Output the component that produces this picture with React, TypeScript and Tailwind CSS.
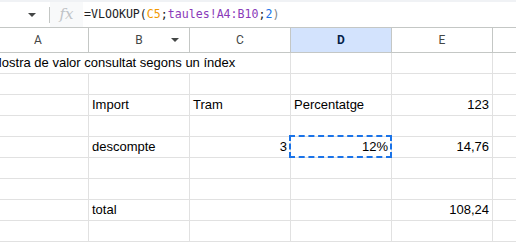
const cols = ["A", "B", "C", "D", "E", "F"];

type Cell = { text?: string; right?: boolean };

const rows: Cell[][] = [
  [],
  [{}, { text: "Import" }, { text: "Tram" }, { text: "Percentatge" }, { text: "123", right: true }],
  [],
  [{}, { text: "descompte" }, { text: "3", right: true }, { text: "12%", right: true }, { text: "14,76", right: true }],
  [],
  [],
  [{}, { text: "total" }, {}, {}, { text: "108,24", right: true }],
  [],
];

function Caret({ className }: { className: string }) {
  return (
    <svg className={className} viewBox="0 0 8 4" fill="#444746">
      <path d="M0 0h8L4 4z" />
    </svg>
  );
}

export default function App() {
  return (
    <div className="w-[516px] h-[243px] overflow-hidden bg-white font-['Liberation_Sans',Arial,sans-serif] text-[13px] text-black">
      <div className="h-[2px] bg-[#f0f2f5]" />
      {/* formula bar */}
      <div className="flex h-[26px] items-center border-b border-[#c4c7c5]">
        <div className="flex w-[49px] justify-end pr-[13px]">
          <Caret className="w-[8px] h-[4px]" />
        </div>
        <div className="h-[16px] w-px bg-[#c4c7c5]" />
        <div className="flex h-full w-[33px] items-center justify-center bg-[#f8f9fa] font-['DejaVu_Serif',serif] italic text-[15px] text-[#c0c3c7]">
          fx
        </div>
        <div className="pl-[1px] font-['DejaVu_Sans_Mono',monospace] text-[11.6px] text-[#202124] whitespace-nowrap">
          =VLOOKUP(<span className="text-[#f29900]">C5</span>;
          <span className="text-[#8a3ab9]">taules!A4:B10</span>;
          <span className="text-[#1a73e8]">2</span>
          <span className="text-[#80868b]">)</span>
        </div>
      </div>

      <div className="overflow-hidden">
        <div className="ml-[-12px] w-[620px]">
          {/* column headers */}
          <div className="flex h-[25px] border-b border-[#c4c7c5] font-['Roboto',sans-serif] text-[12px] text-[#444746]">
            {cols.map((c) => (
              <div
                key={c}
                className={
                  "relative flex w-[101px] shrink-0 items-center justify-center border-r border-[#c4c7c5] " +
                  (c === "D" ? "bg-[#d3e3fd] font-bold text-[#041e49]" : "")
                }
              >
                {c !== "F" && c}
                {c === "B" && <Caret className="absolute right-[10px] top-[10px] w-[8px] h-[4px]" />}
              </div>
            ))}
          </div>

          {/* title row, text overflows across A-C */}
          <div className="flex h-[21px] border-b border-[#e1e1e1]">
            <div className="flex w-[303px] shrink-0 items-end border-r border-[#e1e1e1] pb-[1px] pl-[3px] whitespace-nowrap">
              Mostra de valor consultat segons un índex
            </div>
            <div className="w-[101px] shrink-0 border-r border-[#e1e1e1]" />
            <div className="w-[101px] shrink-0 border-r border-[#e1e1e1]" />
            <div className="w-[101px] shrink-0" />
          </div>

          {rows.map((r, i) => (
            <div key={i} className="flex h-[21px] border-b border-[#e1e1e1]">
              {cols.map((c, j) => {
                const cell = r[j] || {};
                const selected = i === 3 && c === "D";
                return (
                  <div
                    key={c}
                    className={
                      "relative flex w-[101px] shrink-0 items-end border-r border-[#e1e1e1] px-[3px] pb-[1px] whitespace-nowrap " +
                      (cell.right ? "justify-end" : "justify-start")
                    }
                  >
                    {cell.text}
                    {selected && (
                      <div className="absolute -left-[2px] -top-[2px] -right-[1px] -bottom-[1px] border-2 border-dashed border-[#1a73e8]" />
                    )}
                  </div>
                );
              })}
            </div>
          ))}
        </div>
      </div>
    </div>
  );
}
